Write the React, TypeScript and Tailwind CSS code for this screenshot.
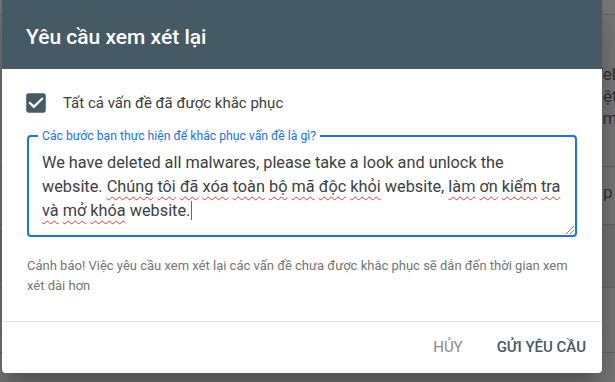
const misspelled = "underline decoration-wavy decoration-[#e53935] decoration-1 underline-offset-[4px]";

function Word({ children }: { children: string }) {
  return <span className={misspelled}>{children}</span>;
}

export default function App() {
  return (
    <div className="relative h-[382px] w-full overflow-hidden bg-white font-['Roboto','Liberation_Sans',sans-serif]">
      {/* page behind the dialog */}
      <div className="flex flex-col text-[17px] leading-[22px] text-[#6f6f6f]">
        <div className="h-[15px] border-b border-[#d8d8d8]" />
        <div className="pt-[48px] whitespace-nowrap">
          <div className="pl-[588px]">Web</div>
          <div className="pl-[588px]">Việt</div>
          <div className="pl-[588px]">tem</div>
        </div>
        <div className="mt-[37px] border-t border-[#d8d8d8] pt-[14px] pl-[590px] whitespace-nowrap">
          s p
        </div>
        <div className="mt-[21px] h-[63px] border-t border-[#d0d0d0] bg-[#f2f2f2]" />
        <div className="h-[65px] border-t border-[#d8d8d8]" />
        <div className="border-t border-[#d8d8d8]" />
      </div>

      {/* overlay */}
      <div className="absolute inset-0 bg-black/[0.52]" />

      {/* dialog */}
      <div className="absolute left-[2px] top-0 flex h-[373px] w-[600px] flex-col rounded-b-[4px] bg-white shadow-[0_11px_15px_-7px_rgba(0,0,0,.2),0_24px_38px_3px_rgba(0,0,0,.14),0_9px_46px_8px_rgba(0,0,0,.12)]">
        <div className="h-[69px] bg-[#455a64] px-[24px] pt-[25px] text-[21px] font-medium leading-[24px] text-white">
          Yêu cầu xem xét lại
        </div>

        <div className="flex flex-col px-[25px] pt-[22px] pb-[24px]">
          <div className="flex h-[24px] items-center">
            <svg width="26" height="26" viewBox="0 0 24 24" className="-ml-[4px] shrink-0">
              <path
                fill="#455a64"
                d="M19 3H5c-1.11 0-2 .9-2 2v14c0 1.1.89 2 2 2h14c1.11 0 2-.9 2-2V5c0-1.1-.89-2-2-2zm-9 14l-5-5 1.41-1.41L10 14.17l7.59-7.59L19 8l-9 9z"
              />
            </svg>
            <span className="ml-[14px] text-[15px] text-[#3c3c3c]">
              Tất cả vấn đề đã được khắc phục
            </span>
          </div>

          <fieldset className="relative mt-[14px] rounded-[4px] border-2 border-[#1a73e8] pl-[9px]">
            <legend className="px-[4px] text-[12.2px] leading-[14px] text-[#1a73e8]">
              Các bước bạn thực hiện để khắc phục vấn đề là gì?
            </legend>
            <div className="ml-[4px] pt-[8px] pr-[10px] pb-[12px] text-[16.3px] leading-[24px] whitespace-nowrap text-[#3c4043]">
              We have deleted all malwares, please take a look and unlock the
              <br />
              website. <Word>Chúng</Word> <Word>tôi</Word> <Word>đã</Word> <Word>xóa</Word>{" "}
              <Word>toàn</Word> <Word>bộ</Word> <Word>mã</Word> <Word>độc</Word>{" "}
              <Word>khỏi</Word> website, <Word>làm</Word> <Word>ơn</Word>{" "}
              <Word>kiểm</Word> <Word>tra</Word>
              <br />
              <Word>và</Word> <Word>mở</Word> <Word>khóa</Word> website.
              <span className="ml-px inline-block h-[19px] w-px bg-[#1a73e8] align-[-4px]" />
            </div>
            <svg width="9" height="9" viewBox="0 0 9 9" className="absolute right-[1px] bottom-[1px]">
              <path d="M9 1L1 9M9 5L5 9" stroke="#8a8a8a" strokeWidth="1" />
            </svg>
          </fieldset>

          <p className="mt-[19px] text-[13px] leading-[20px] text-[#757575]">
            Cảnh báo! Việc yêu cầu xem xét lại các vấn đề chưa được khắc phục sẽ dẫn đến thời gian xem xét dài hơn
          </p>
        </div>

        <div className="mt-auto flex h-[52px] items-center justify-end gap-[34px] border-t border-[#e0e0e0] pr-[16px] text-[15px]">
          <span className="text-[#8a8a8a]">HỦY</span>
          <span className="font-medium text-[#455a64]">GỬI YÊU CẦU</span>
        </div>
      </div>
    </div>
  );
}
